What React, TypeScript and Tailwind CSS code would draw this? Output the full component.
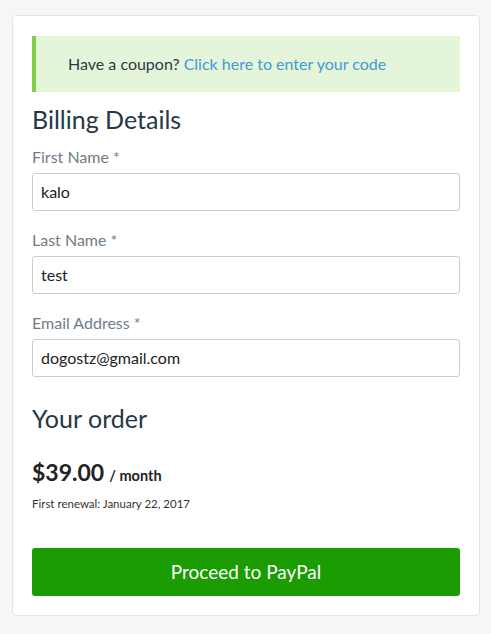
export default function App() {
	return (
		<div className="min-h-[634px] bg-[#f5f6f8] pt-[15px] px-[12px] font-['Lato',sans-serif]">
			<div className="w-[468px] rounded-[4px] border border-[#e2e4e7] bg-white px-[19px] pt-[20px] pb-[19px]">
				{/* coupon notice */}
				<div className="flex h-[56px] items-center border-l-[4px] border-[#80cf47] bg-[#e4f5da] pl-[32px] text-[16px] text-[#2e3a45]">
					<span>Have a coupon? </span>
					<a href="#" className="ml-[4px] text-[#3f9bd6]">Click here to enter your code</a>
				</div>

				<h2 className="mt-[12px] text-[25px] leading-[30px] text-[#263746]">Billing Details</h2>

				<Field label="First Name *" value="kalo" className="mt-[13px]" />
				<Field label="Last Name *" value="test" className="mt-[19px]" />
				<Field label="Email Address *" value="dogostz@gmail.com" className="mt-[19px]" />

				<h2 className="mt-[26px] text-[25px] leading-[30px] text-[#263746]">Your order</h2>

				<div className="mt-[25px] flex items-baseline gap-[5px] text-[#222]">
					<span className="text-[23px] font-bold leading-[28px]">$39.00</span>
					<span className="text-[14.5px] font-bold">/ month</span>
				</div>
				<p className="mt-[8px] text-[11.5px] text-[#333]">First renewal: January 22, 2017</p>

				<button className="mt-[36px] flex h-[48px] w-full items-center justify-center rounded-[3px] bg-[#1a9c02] text-[19px] text-white">
					Proceed to PayPal
				</button>
			</div>
		</div>
	)
}

function Field({ label, value, className }: { label: string, value: string, className?: string }) {
	return (
		<div className={className}>
			<label className="block text-[16px] leading-[20px] text-[#6f7c88]">{label}</label>
			<div className="mt-[6px] flex h-[38px] items-center rounded-[3px] border border-[#cccccc] px-[8px] text-[16px] text-[#222]">
				{value}
			</div>
		</div>
	)
}
